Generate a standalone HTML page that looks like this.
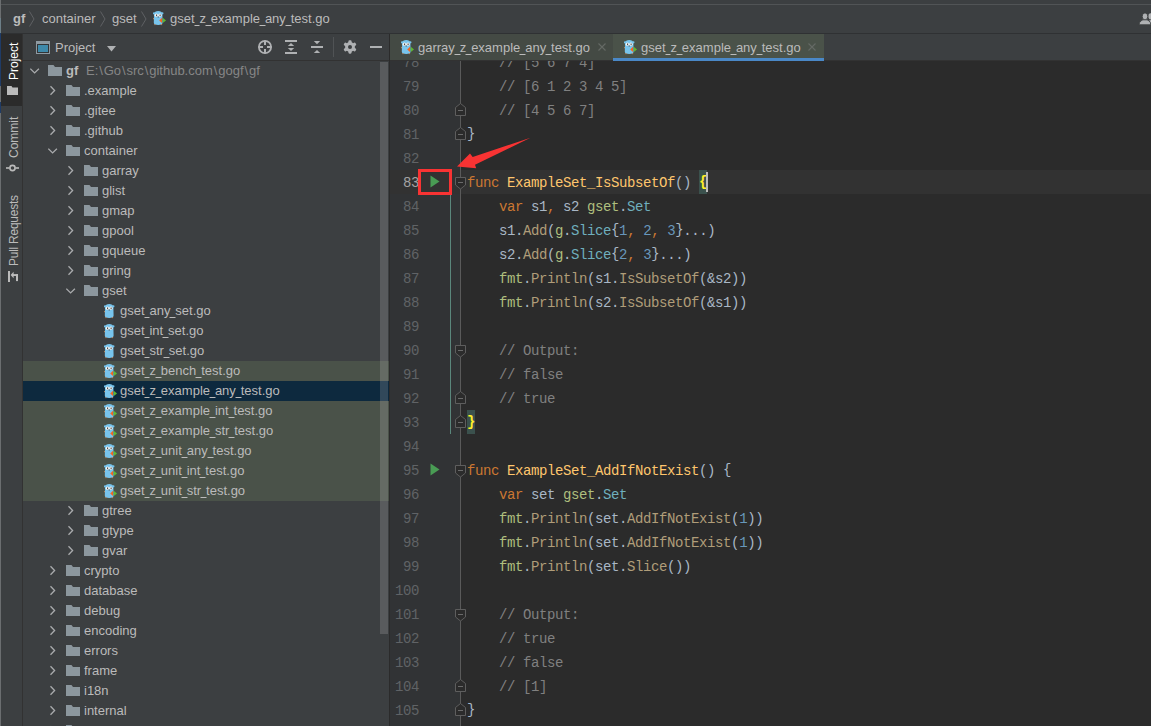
<!DOCTYPE html><html><head><meta charset="utf-8"><style>
*{margin:0;padding:0;box-sizing:border-box}
html,body{width:1151px;height:726px;overflow:hidden;background:#3c3f41}
body{position:relative;font-family:"Liberation Sans",sans-serif;font-size:13px;color:#bbbbbb}
.a{position:absolute}
.t{position:absolute;white-space:pre;line-height:20px;height:20px}
.u{display:inline-block;width:4.9px;height:1px;vertical-align:-3px;background:currentColor;box-shadow:-0.5px 0 0 currentColor,0.5px 0 0 currentColor}.bs{margin:0 0.9px}
#ed{position:absolute;left:390px;top:61px;width:761px;height:665px;overflow:hidden;background:#2b2b2b}
.code{position:absolute;left:77px;white-space:pre;font-family:"Liberation Mono",monospace;font-size:14px;letter-spacing:-0.4px;line-height:24px;height:24px;color:#a9b7c6}
.ln{position:absolute;left:0;width:29px;text-align:right;white-space:pre;font-family:"Liberation Mono",monospace;font-size:14px;letter-spacing:-0.4px;line-height:24px;height:24px;color:#606366}
.k{color:#cc7832}.fn{color:#ffc66d}.pk{color:#afbf7e}.ty{color:#6fafbd}.mc{color:#b09d79}.nu{color:#6897bb}.cm{color:#808080}
.hb{color:#ffef28;font-weight:bold}
.br{position:relative;top:-1px}
</style></head><body>

<div class="a" style="left:0;top:0;width:1px;height:726px;background:#6b6e70"></div>
<div class="a" style="left:0;top:18px;width:1px;height:15px;background:#6d7f88"></div>
<div class="a" style="left:0;top:33px;width:1px;height:53px;background:#1f3b66"></div>
<div class="a" style="left:0;top:102px;width:1px;height:11px;background:#1f3b66"></div>
<div class="a" style="left:1px;top:4px;width:1150px;height:1px;background:#515456"></div>
<div class="a" style="left:1px;top:33px;width:1150px;height:1px;background:#2f3133"></div>
<div class="t" style="left:13px;top:9px;font-weight:bold">gf</div>
<svg style="position:absolute;left:29px;top:11px" width="6" height="16" viewBox="0 0 6 16"><path d="M0.5,0.5 L5,8 L0.5,15.5" fill="none" stroke="#5e6163" stroke-width="1"/></svg>
<div class="t" style="left:42px;top:9px">container</div>
<svg style="position:absolute;left:100px;top:11px" width="6" height="16" viewBox="0 0 6 16"><path d="M0.5,0.5 L5,8 L0.5,15.5" fill="none" stroke="#5e6163" stroke-width="1"/></svg>
<div class="t" style="left:112px;top:9px">gset</div>
<svg style="position:absolute;left:141px;top:11px" width="6" height="16" viewBox="0 0 6 16"><path d="M0.5,0.5 L5,8 L0.5,15.5" fill="none" stroke="#5e6163" stroke-width="1"/></svg>
<svg style="position:absolute;left:153px;top:11px" width="14" height="15" viewBox="0 0 14 15"><path d="M1,3.2 C1,1 3,0 5.2,0 C7.4,0 9.4,1 9.4,3.2 L9.6,11.5 C9.6,13.3 7.8,14 5.2,14 C2.6,14 0.8,13.3 0.8,11.5 Z" fill="#78c4ec"/><circle cx="1" cy="2.3" r="1.1" fill="#78c4ec"/><circle cx="9.4" cy="2.3" r="1.1" fill="#78c4ec"/><circle cx="3.4" cy="4.3" r="1.7" fill="#f2f2f2"/><circle cx="6.9" cy="4.3" r="1.7" fill="#f2f2f2"/><rect x="3.1" y="3.5" width="1" height="1.7" fill="#3c3c3c"/><rect x="6.6" y="3.5" width="1" height="1.7" fill="#3c3c3c"/><rect x="4.6" y="5.6" width="1.3" height="0.9" fill="#5a5a5a"/><rect x="-0.1" y="7" width="1" height="1.2" fill="#c08a60"/><rect x="1.3" y="13.1" width="1.2" height="1" fill="#c08a60"/><rect x="7.9" y="13.1" width="1.2" height="1" fill="#c08a60"/><path d="M9,6.8 L6.2,9.4 L9,12 Z" fill="#f26522"/><path d="M9.8,6.8 L13,9.4 L9.8,12 Z" fill="#5fb832"/></svg>
<div class="t" style="left:170px;top:9px">gset<span class="u"></span>z<span class="u"></span>example<span class="u"></span>any<span class="u"></span>test.go</div>
<svg style="position:absolute;left:1138px;top:12px" width="13" height="14" viewBox="0 0 13 14"><ellipse cx="12.6" cy="4.3" rx="2.2" ry="3.1" fill="#afb1b3"/><path d="M10,11 C10.5,8.8 11.5,8 13,8 V11 Z" fill="#afb1b3"/><path d="M1,12.8 C1.3,9.4 3.8,7.6 7,7.6 C10.2,7.6 12.7,9.4 13,12.8 Z" fill="#afb1b3" stroke="#3c3f41" stroke-width="0.9"/><ellipse cx="7" cy="4.4" rx="2.8" ry="3.5" fill="#afb1b3" stroke="#3c3f41" stroke-width="0.9"/></svg>
<div class="a" style="left:1px;top:34px;width:21px;height:72px;background:#2b2b2b"></div>
<div class="a" style="left:22px;top:34px;width:1px;height:692px;background:#323232"></div>
<div class="a" style="left:6.5px;top:42px;width:38px;height:14px;line-height:14px;white-space:pre;color:#ffffff;font-size:12px;letter-spacing:0px;transform-origin:0 0;transform:translate(0,38px) rotate(-90deg)">Project</div>
<svg style="position:absolute;left:7px;top:86px" width="11" height="9" viewBox="0 0 11 9"><path d="M0,0 H4.5 L5.5,1.5 H11 V9 H0 Z" fill="#bbbbbb"/></svg>
<div class="a" style="left:7px;top:117px;width:41px;height:14px;line-height:14px;white-space:pre;color:#bbbbbb;font-size:12px;letter-spacing:0px;transform-origin:0 0;transform:translate(0,41px) rotate(-90deg)">Commit</div>
<svg style="position:absolute;left:6px;top:164px" width="13" height="8" viewBox="0 0 13 8"><circle cx="6.5" cy="4" r="2.6" fill="none" stroke="#bbbbbb" stroke-width="1.6"/><rect x="0" y="3.2" width="3.5" height="1.6" fill="#bbbbbb"/><rect x="9.5" y="3.2" width="3.5" height="1.6" fill="#bbbbbb"/></svg>
<div class="a" style="left:6.5px;top:196px;width:70px;height:14px;line-height:14px;white-space:pre;color:#bbbbbb;font-size:12px;letter-spacing:-0.25px;transform-origin:0 0;transform:translate(0,70px) rotate(-90deg)">Pull Requests</div>
<svg style="position:absolute;left:8px;top:271px" width="10" height="11" viewBox="0 0 10 11"><rect x="0" y="0" width="2" height="11" fill="#bbbbbb"/><path d="M2.6,4 L5.6,0.8 L5.6,7.2 Z" fill="#bbbbbb"/><rect x="5" y="3.1" width="5" height="1.9" fill="#bbbbbb"/><rect x="8" y="3.1" width="2" height="7" fill="#bbbbbb"/></svg>
<div class="a" style="left:23px;top:60px;width:366px;height:1px;background:#323232"></div>
<svg style="position:absolute;left:36px;top:41px" width="14" height="13" viewBox="0 0 14 13"><rect x="0" y="0" width="14" height="13" fill="#8e9aa2"/><rect x="1" y="3" width="12" height="9" fill="#323537"/><rect x="2" y="4" width="10" height="7" fill="#3e8aab"/></svg>
<div class="t" style="left:55px;top:38px">Project</div>
<svg style="position:absolute;left:107px;top:46px" width="10" height="6" viewBox="0 0 10 6"><path d="M0,0 H9 L4.5,5.5 Z" fill="#afb1b3"/></svg>
<svg style="position:absolute;left:258px;top:40px" width="14" height="14" viewBox="0 0 14 14"><circle cx="7" cy="7" r="6.1" fill="none" stroke="#afb1b3" stroke-width="1.8"/><rect x="6" y="0.5" width="2" height="4.5" fill="#afb1b3"/><rect x="6" y="9" width="2" height="4.5" fill="#afb1b3"/><rect x="0.5" y="6" width="4.5" height="2" fill="#afb1b3"/><rect x="9" y="6" width="4.5" height="2" fill="#afb1b3"/></svg>
<svg style="position:absolute;left:285px;top:40px" width="12" height="14" viewBox="0 0 12 14"><rect x="0" y="0" width="12" height="2" fill="#afb1b3"/><rect x="0" y="12" width="12" height="2" fill="#afb1b3"/><path d="M2.8,6 L6,2.9 L9.2,6 Z" fill="#afb1b3"/><path d="M2.8,8 L6,11.1 L9.2,8 Z" fill="#afb1b3"/></svg>
<svg style="position:absolute;left:311px;top:40px" width="12" height="14" viewBox="0 0 12 14"><rect x="0" y="6" width="12" height="2" fill="#afb1b3"/><path d="M2.8,1 L9.2,1 L6,4.2 Z" fill="#afb1b3"/><path d="M2.8,13 L9.2,13 L6,9.9 Z" fill="#afb1b3"/></svg>
<div class="a" style="left:333px;top:37px;width:1px;height:20px;background:#505355"></div>
<svg style="position:absolute;left:343px;top:40px" width="14" height="14" viewBox="0 0 14 14"><circle cx="7" cy="7" r="4.9" fill="#afb1b3"/><rect x="5.4" y="0.3" width="3.2" height="3.5" rx="1.1" fill="#afb1b3" transform="rotate(0 7 7)"/><rect x="5.4" y="0.3" width="3.2" height="3.5" rx="1.1" fill="#afb1b3" transform="rotate(60 7 7)"/><rect x="5.4" y="0.3" width="3.2" height="3.5" rx="1.1" fill="#afb1b3" transform="rotate(120 7 7)"/><rect x="5.4" y="0.3" width="3.2" height="3.5" rx="1.1" fill="#afb1b3" transform="rotate(180 7 7)"/><rect x="5.4" y="0.3" width="3.2" height="3.5" rx="1.1" fill="#afb1b3" transform="rotate(240 7 7)"/><rect x="5.4" y="0.3" width="3.2" height="3.5" rx="1.1" fill="#afb1b3" transform="rotate(300 7 7)"/><circle cx="7" cy="7" r="2" fill="#3c3f41"/></svg>
<div class="a" style="left:370px;top:46px;width:12px;height:2px;background:#afb1b3"></div>
<div class="a" style="left:23px;top:361px;width:366px;height:20px;background:#4a5249"></div>
<div class="a" style="left:23px;top:381px;width:366px;height:20px;background:#0d293e"></div>
<div class="a" style="left:23px;top:401px;width:366px;height:20px;background:#4a5249"></div>
<div class="a" style="left:23px;top:421px;width:366px;height:20px;background:#4a5249"></div>
<div class="a" style="left:23px;top:441px;width:366px;height:20px;background:#4a5249"></div>
<div class="a" style="left:23px;top:461px;width:366px;height:20px;background:#4a5249"></div>
<div class="a" style="left:23px;top:481px;width:366px;height:20px;background:#4a5249"></div>
<svg style="position:absolute;left:30px;top:68px" width="10" height="6" viewBox="0 0 10 6"><path d="M0.3,0.7 L4.6,4.9 L8.9,0.7" fill="none" stroke="#a9abad" stroke-width="1.3"/></svg>
<svg style="position:absolute;left:48px;top:65px" width="14" height="11" viewBox="0 0 14 11"><path d="M0,0 H5.5 L7,2 H14 V11 H0 Z" fill="#8c979e"/></svg>
<div class="t" style="left:66px;top:61px;font-weight:bold">gf</div>
<div class="t" style="left:86px;top:61px;color:#868686">E:<span class="bs">\</span>Go<span class="bs">\</span>src<span class="bs">\</span>github.com<span class="bs">\</span>gogf<span class="bs">\</span>gf</div>
<svg style="position:absolute;left:50px;top:85px" width="6" height="11" viewBox="0 0 6 11"><path d="M0.5,1.2 L4.6,5.5 L0.5,9.8" fill="none" stroke="#a9abad" stroke-width="1.3"/></svg>
<svg style="position:absolute;left:66px;top:85px" width="14" height="11" viewBox="0 0 14 11"><path d="M0,0 H5.5 L7,2 H14 V11 H0 Z" fill="#8c979e"/></svg>
<div class="t" style="left:84px;top:81px">.example</div>
<svg style="position:absolute;left:50px;top:105px" width="6" height="11" viewBox="0 0 6 11"><path d="M0.5,1.2 L4.6,5.5 L0.5,9.8" fill="none" stroke="#a9abad" stroke-width="1.3"/></svg>
<svg style="position:absolute;left:66px;top:105px" width="14" height="11" viewBox="0 0 14 11"><path d="M0,0 H5.5 L7,2 H14 V11 H0 Z" fill="#8c979e"/></svg>
<div class="t" style="left:84px;top:101px">.gitee</div>
<svg style="position:absolute;left:50px;top:125px" width="6" height="11" viewBox="0 0 6 11"><path d="M0.5,1.2 L4.6,5.5 L0.5,9.8" fill="none" stroke="#a9abad" stroke-width="1.3"/></svg>
<svg style="position:absolute;left:66px;top:125px" width="14" height="11" viewBox="0 0 14 11"><path d="M0,0 H5.5 L7,2 H14 V11 H0 Z" fill="#8c979e"/></svg>
<div class="t" style="left:84px;top:121px">.github</div>
<svg style="position:absolute;left:48px;top:148px" width="10" height="6" viewBox="0 0 10 6"><path d="M0.3,0.7 L4.6,4.9 L8.9,0.7" fill="none" stroke="#a9abad" stroke-width="1.3"/></svg>
<svg style="position:absolute;left:66px;top:145px" width="14" height="11" viewBox="0 0 14 11"><path d="M0,0 H5.5 L7,2 H14 V11 H0 Z" fill="#8c979e"/></svg>
<div class="t" style="left:84px;top:141px">container</div>
<svg style="position:absolute;left:68px;top:165px" width="6" height="11" viewBox="0 0 6 11"><path d="M0.5,1.2 L4.6,5.5 L0.5,9.8" fill="none" stroke="#a9abad" stroke-width="1.3"/></svg>
<svg style="position:absolute;left:84px;top:165px" width="14" height="11" viewBox="0 0 14 11"><path d="M0,0 H5.5 L7,2 H14 V11 H0 Z" fill="#8c979e"/></svg>
<div class="t" style="left:102px;top:161px">garray</div>
<svg style="position:absolute;left:68px;top:185px" width="6" height="11" viewBox="0 0 6 11"><path d="M0.5,1.2 L4.6,5.5 L0.5,9.8" fill="none" stroke="#a9abad" stroke-width="1.3"/></svg>
<svg style="position:absolute;left:84px;top:185px" width="14" height="11" viewBox="0 0 14 11"><path d="M0,0 H5.5 L7,2 H14 V11 H0 Z" fill="#8c979e"/></svg>
<div class="t" style="left:102px;top:181px">glist</div>
<svg style="position:absolute;left:68px;top:205px" width="6" height="11" viewBox="0 0 6 11"><path d="M0.5,1.2 L4.6,5.5 L0.5,9.8" fill="none" stroke="#a9abad" stroke-width="1.3"/></svg>
<svg style="position:absolute;left:84px;top:205px" width="14" height="11" viewBox="0 0 14 11"><path d="M0,0 H5.5 L7,2 H14 V11 H0 Z" fill="#8c979e"/></svg>
<div class="t" style="left:102px;top:201px">gmap</div>
<svg style="position:absolute;left:68px;top:225px" width="6" height="11" viewBox="0 0 6 11"><path d="M0.5,1.2 L4.6,5.5 L0.5,9.8" fill="none" stroke="#a9abad" stroke-width="1.3"/></svg>
<svg style="position:absolute;left:84px;top:225px" width="14" height="11" viewBox="0 0 14 11"><path d="M0,0 H5.5 L7,2 H14 V11 H0 Z" fill="#8c979e"/></svg>
<div class="t" style="left:102px;top:221px">gpool</div>
<svg style="position:absolute;left:68px;top:245px" width="6" height="11" viewBox="0 0 6 11"><path d="M0.5,1.2 L4.6,5.5 L0.5,9.8" fill="none" stroke="#a9abad" stroke-width="1.3"/></svg>
<svg style="position:absolute;left:84px;top:245px" width="14" height="11" viewBox="0 0 14 11"><path d="M0,0 H5.5 L7,2 H14 V11 H0 Z" fill="#8c979e"/></svg>
<div class="t" style="left:102px;top:241px">gqueue</div>
<svg style="position:absolute;left:68px;top:265px" width="6" height="11" viewBox="0 0 6 11"><path d="M0.5,1.2 L4.6,5.5 L0.5,9.8" fill="none" stroke="#a9abad" stroke-width="1.3"/></svg>
<svg style="position:absolute;left:84px;top:265px" width="14" height="11" viewBox="0 0 14 11"><path d="M0,0 H5.5 L7,2 H14 V11 H0 Z" fill="#8c979e"/></svg>
<div class="t" style="left:102px;top:261px">gring</div>
<svg style="position:absolute;left:66px;top:288px" width="10" height="6" viewBox="0 0 10 6"><path d="M0.3,0.7 L4.6,4.9 L8.9,0.7" fill="none" stroke="#a9abad" stroke-width="1.3"/></svg>
<svg style="position:absolute;left:84px;top:285px" width="14" height="11" viewBox="0 0 14 11"><path d="M0,0 H5.5 L7,2 H14 V11 H0 Z" fill="#8c979e"/></svg>
<div class="t" style="left:102px;top:281px">gset</div>
<svg style="position:absolute;left:104px;top:304px" width="14" height="15" viewBox="0 0 14 15"><path d="M1,3.2 C1,1 3,0 5.2,0 C7.4,0 9.4,1 9.4,3.2 L9.6,11.5 C9.6,13.3 7.8,14 5.2,14 C2.6,14 0.8,13.3 0.8,11.5 Z" fill="#78c4ec"/><circle cx="1" cy="2.3" r="1.1" fill="#78c4ec"/><circle cx="9.4" cy="2.3" r="1.1" fill="#78c4ec"/><circle cx="3.4" cy="4.3" r="1.7" fill="#f2f2f2"/><circle cx="6.9" cy="4.3" r="1.7" fill="#f2f2f2"/><rect x="3.1" y="3.5" width="1" height="1.7" fill="#3c3c3c"/><rect x="6.6" y="3.5" width="1" height="1.7" fill="#3c3c3c"/><rect x="4.6" y="5.6" width="1.3" height="0.9" fill="#5a5a5a"/><rect x="-0.1" y="7" width="1" height="1.2" fill="#c08a60"/><rect x="1.3" y="13.1" width="1.2" height="1" fill="#c08a60"/><rect x="7.9" y="13.1" width="1.2" height="1" fill="#c08a60"/></svg>
<div class="t" style="left:120px;top:301px">gset<span class="u"></span>any<span class="u"></span>set.go</div>
<svg style="position:absolute;left:104px;top:324px" width="14" height="15" viewBox="0 0 14 15"><path d="M1,3.2 C1,1 3,0 5.2,0 C7.4,0 9.4,1 9.4,3.2 L9.6,11.5 C9.6,13.3 7.8,14 5.2,14 C2.6,14 0.8,13.3 0.8,11.5 Z" fill="#78c4ec"/><circle cx="1" cy="2.3" r="1.1" fill="#78c4ec"/><circle cx="9.4" cy="2.3" r="1.1" fill="#78c4ec"/><circle cx="3.4" cy="4.3" r="1.7" fill="#f2f2f2"/><circle cx="6.9" cy="4.3" r="1.7" fill="#f2f2f2"/><rect x="3.1" y="3.5" width="1" height="1.7" fill="#3c3c3c"/><rect x="6.6" y="3.5" width="1" height="1.7" fill="#3c3c3c"/><rect x="4.6" y="5.6" width="1.3" height="0.9" fill="#5a5a5a"/><rect x="-0.1" y="7" width="1" height="1.2" fill="#c08a60"/><rect x="1.3" y="13.1" width="1.2" height="1" fill="#c08a60"/><rect x="7.9" y="13.1" width="1.2" height="1" fill="#c08a60"/></svg>
<div class="t" style="left:120px;top:321px">gset<span class="u"></span>int<span class="u"></span>set.go</div>
<svg style="position:absolute;left:104px;top:344px" width="14" height="15" viewBox="0 0 14 15"><path d="M1,3.2 C1,1 3,0 5.2,0 C7.4,0 9.4,1 9.4,3.2 L9.6,11.5 C9.6,13.3 7.8,14 5.2,14 C2.6,14 0.8,13.3 0.8,11.5 Z" fill="#78c4ec"/><circle cx="1" cy="2.3" r="1.1" fill="#78c4ec"/><circle cx="9.4" cy="2.3" r="1.1" fill="#78c4ec"/><circle cx="3.4" cy="4.3" r="1.7" fill="#f2f2f2"/><circle cx="6.9" cy="4.3" r="1.7" fill="#f2f2f2"/><rect x="3.1" y="3.5" width="1" height="1.7" fill="#3c3c3c"/><rect x="6.6" y="3.5" width="1" height="1.7" fill="#3c3c3c"/><rect x="4.6" y="5.6" width="1.3" height="0.9" fill="#5a5a5a"/><rect x="-0.1" y="7" width="1" height="1.2" fill="#c08a60"/><rect x="1.3" y="13.1" width="1.2" height="1" fill="#c08a60"/><rect x="7.9" y="13.1" width="1.2" height="1" fill="#c08a60"/></svg>
<div class="t" style="left:120px;top:341px">gset<span class="u"></span>str<span class="u"></span>set.go</div>
<svg style="position:absolute;left:104px;top:364px" width="14" height="15" viewBox="0 0 14 15"><path d="M1,3.2 C1,1 3,0 5.2,0 C7.4,0 9.4,1 9.4,3.2 L9.6,11.5 C9.6,13.3 7.8,14 5.2,14 C2.6,14 0.8,13.3 0.8,11.5 Z" fill="#78c4ec"/><circle cx="1" cy="2.3" r="1.1" fill="#78c4ec"/><circle cx="9.4" cy="2.3" r="1.1" fill="#78c4ec"/><circle cx="3.4" cy="4.3" r="1.7" fill="#f2f2f2"/><circle cx="6.9" cy="4.3" r="1.7" fill="#f2f2f2"/><rect x="3.1" y="3.5" width="1" height="1.7" fill="#3c3c3c"/><rect x="6.6" y="3.5" width="1" height="1.7" fill="#3c3c3c"/><rect x="4.6" y="5.6" width="1.3" height="0.9" fill="#5a5a5a"/><rect x="-0.1" y="7" width="1" height="1.2" fill="#c08a60"/><rect x="1.3" y="13.1" width="1.2" height="1" fill="#c08a60"/><rect x="7.9" y="13.1" width="1.2" height="1" fill="#c08a60"/><path d="M9,6.8 L6.2,9.4 L9,12 Z" fill="#f26522"/><path d="M9.8,6.8 L13,9.4 L9.8,12 Z" fill="#5fb832"/></svg>
<div class="t" style="left:120px;top:361px">gset<span class="u"></span>z<span class="u"></span>bench<span class="u"></span>test.go</div>
<svg style="position:absolute;left:104px;top:384px" width="14" height="15" viewBox="0 0 14 15"><path d="M1,3.2 C1,1 3,0 5.2,0 C7.4,0 9.4,1 9.4,3.2 L9.6,11.5 C9.6,13.3 7.8,14 5.2,14 C2.6,14 0.8,13.3 0.8,11.5 Z" fill="#78c4ec"/><circle cx="1" cy="2.3" r="1.1" fill="#78c4ec"/><circle cx="9.4" cy="2.3" r="1.1" fill="#78c4ec"/><circle cx="3.4" cy="4.3" r="1.7" fill="#f2f2f2"/><circle cx="6.9" cy="4.3" r="1.7" fill="#f2f2f2"/><rect x="3.1" y="3.5" width="1" height="1.7" fill="#3c3c3c"/><rect x="6.6" y="3.5" width="1" height="1.7" fill="#3c3c3c"/><rect x="4.6" y="5.6" width="1.3" height="0.9" fill="#5a5a5a"/><rect x="-0.1" y="7" width="1" height="1.2" fill="#c08a60"/><rect x="1.3" y="13.1" width="1.2" height="1" fill="#c08a60"/><rect x="7.9" y="13.1" width="1.2" height="1" fill="#c08a60"/><path d="M9,6.8 L6.2,9.4 L9,12 Z" fill="#f26522"/><path d="M9.8,6.8 L13,9.4 L9.8,12 Z" fill="#5fb832"/></svg>
<div class="t" style="left:120px;top:381px">gset<span class="u"></span>z<span class="u"></span>example<span class="u"></span>any<span class="u"></span>test.go</div>
<svg style="position:absolute;left:104px;top:404px" width="14" height="15" viewBox="0 0 14 15"><path d="M1,3.2 C1,1 3,0 5.2,0 C7.4,0 9.4,1 9.4,3.2 L9.6,11.5 C9.6,13.3 7.8,14 5.2,14 C2.6,14 0.8,13.3 0.8,11.5 Z" fill="#78c4ec"/><circle cx="1" cy="2.3" r="1.1" fill="#78c4ec"/><circle cx="9.4" cy="2.3" r="1.1" fill="#78c4ec"/><circle cx="3.4" cy="4.3" r="1.7" fill="#f2f2f2"/><circle cx="6.9" cy="4.3" r="1.7" fill="#f2f2f2"/><rect x="3.1" y="3.5" width="1" height="1.7" fill="#3c3c3c"/><rect x="6.6" y="3.5" width="1" height="1.7" fill="#3c3c3c"/><rect x="4.6" y="5.6" width="1.3" height="0.9" fill="#5a5a5a"/><rect x="-0.1" y="7" width="1" height="1.2" fill="#c08a60"/><rect x="1.3" y="13.1" width="1.2" height="1" fill="#c08a60"/><rect x="7.9" y="13.1" width="1.2" height="1" fill="#c08a60"/><path d="M9,6.8 L6.2,9.4 L9,12 Z" fill="#f26522"/><path d="M9.8,6.8 L13,9.4 L9.8,12 Z" fill="#5fb832"/></svg>
<div class="t" style="left:120px;top:401px">gset<span class="u"></span>z<span class="u"></span>example<span class="u"></span>int<span class="u"></span>test.go</div>
<svg style="position:absolute;left:104px;top:424px" width="14" height="15" viewBox="0 0 14 15"><path d="M1,3.2 C1,1 3,0 5.2,0 C7.4,0 9.4,1 9.4,3.2 L9.6,11.5 C9.6,13.3 7.8,14 5.2,14 C2.6,14 0.8,13.3 0.8,11.5 Z" fill="#78c4ec"/><circle cx="1" cy="2.3" r="1.1" fill="#78c4ec"/><circle cx="9.4" cy="2.3" r="1.1" fill="#78c4ec"/><circle cx="3.4" cy="4.3" r="1.7" fill="#f2f2f2"/><circle cx="6.9" cy="4.3" r="1.7" fill="#f2f2f2"/><rect x="3.1" y="3.5" width="1" height="1.7" fill="#3c3c3c"/><rect x="6.6" y="3.5" width="1" height="1.7" fill="#3c3c3c"/><rect x="4.6" y="5.6" width="1.3" height="0.9" fill="#5a5a5a"/><rect x="-0.1" y="7" width="1" height="1.2" fill="#c08a60"/><rect x="1.3" y="13.1" width="1.2" height="1" fill="#c08a60"/><rect x="7.9" y="13.1" width="1.2" height="1" fill="#c08a60"/><path d="M9,6.8 L6.2,9.4 L9,12 Z" fill="#f26522"/><path d="M9.8,6.8 L13,9.4 L9.8,12 Z" fill="#5fb832"/></svg>
<div class="t" style="left:120px;top:421px">gset<span class="u"></span>z<span class="u"></span>example<span class="u"></span>str<span class="u"></span>test.go</div>
<svg style="position:absolute;left:104px;top:444px" width="14" height="15" viewBox="0 0 14 15"><path d="M1,3.2 C1,1 3,0 5.2,0 C7.4,0 9.4,1 9.4,3.2 L9.6,11.5 C9.6,13.3 7.8,14 5.2,14 C2.6,14 0.8,13.3 0.8,11.5 Z" fill="#78c4ec"/><circle cx="1" cy="2.3" r="1.1" fill="#78c4ec"/><circle cx="9.4" cy="2.3" r="1.1" fill="#78c4ec"/><circle cx="3.4" cy="4.3" r="1.7" fill="#f2f2f2"/><circle cx="6.9" cy="4.3" r="1.7" fill="#f2f2f2"/><rect x="3.1" y="3.5" width="1" height="1.7" fill="#3c3c3c"/><rect x="6.6" y="3.5" width="1" height="1.7" fill="#3c3c3c"/><rect x="4.6" y="5.6" width="1.3" height="0.9" fill="#5a5a5a"/><rect x="-0.1" y="7" width="1" height="1.2" fill="#c08a60"/><rect x="1.3" y="13.1" width="1.2" height="1" fill="#c08a60"/><rect x="7.9" y="13.1" width="1.2" height="1" fill="#c08a60"/><path d="M9,6.8 L6.2,9.4 L9,12 Z" fill="#f26522"/><path d="M9.8,6.8 L13,9.4 L9.8,12 Z" fill="#5fb832"/></svg>
<div class="t" style="left:120px;top:441px">gset<span class="u"></span>z<span class="u"></span>unit<span class="u"></span>any<span class="u"></span>test.go</div>
<svg style="position:absolute;left:104px;top:464px" width="14" height="15" viewBox="0 0 14 15"><path d="M1,3.2 C1,1 3,0 5.2,0 C7.4,0 9.4,1 9.4,3.2 L9.6,11.5 C9.6,13.3 7.8,14 5.2,14 C2.6,14 0.8,13.3 0.8,11.5 Z" fill="#78c4ec"/><circle cx="1" cy="2.3" r="1.1" fill="#78c4ec"/><circle cx="9.4" cy="2.3" r="1.1" fill="#78c4ec"/><circle cx="3.4" cy="4.3" r="1.7" fill="#f2f2f2"/><circle cx="6.9" cy="4.3" r="1.7" fill="#f2f2f2"/><rect x="3.1" y="3.5" width="1" height="1.7" fill="#3c3c3c"/><rect x="6.6" y="3.5" width="1" height="1.7" fill="#3c3c3c"/><rect x="4.6" y="5.6" width="1.3" height="0.9" fill="#5a5a5a"/><rect x="-0.1" y="7" width="1" height="1.2" fill="#c08a60"/><rect x="1.3" y="13.1" width="1.2" height="1" fill="#c08a60"/><rect x="7.9" y="13.1" width="1.2" height="1" fill="#c08a60"/><path d="M9,6.8 L6.2,9.4 L9,12 Z" fill="#f26522"/><path d="M9.8,6.8 L13,9.4 L9.8,12 Z" fill="#5fb832"/></svg>
<div class="t" style="left:120px;top:461px">gset<span class="u"></span>z<span class="u"></span>unit<span class="u"></span>int<span class="u"></span>test.go</div>
<svg style="position:absolute;left:104px;top:484px" width="14" height="15" viewBox="0 0 14 15"><path d="M1,3.2 C1,1 3,0 5.2,0 C7.4,0 9.4,1 9.4,3.2 L9.6,11.5 C9.6,13.3 7.8,14 5.2,14 C2.6,14 0.8,13.3 0.8,11.5 Z" fill="#78c4ec"/><circle cx="1" cy="2.3" r="1.1" fill="#78c4ec"/><circle cx="9.4" cy="2.3" r="1.1" fill="#78c4ec"/><circle cx="3.4" cy="4.3" r="1.7" fill="#f2f2f2"/><circle cx="6.9" cy="4.3" r="1.7" fill="#f2f2f2"/><rect x="3.1" y="3.5" width="1" height="1.7" fill="#3c3c3c"/><rect x="6.6" y="3.5" width="1" height="1.7" fill="#3c3c3c"/><rect x="4.6" y="5.6" width="1.3" height="0.9" fill="#5a5a5a"/><rect x="-0.1" y="7" width="1" height="1.2" fill="#c08a60"/><rect x="1.3" y="13.1" width="1.2" height="1" fill="#c08a60"/><rect x="7.9" y="13.1" width="1.2" height="1" fill="#c08a60"/><path d="M9,6.8 L6.2,9.4 L9,12 Z" fill="#f26522"/><path d="M9.8,6.8 L13,9.4 L9.8,12 Z" fill="#5fb832"/></svg>
<div class="t" style="left:120px;top:481px">gset<span class="u"></span>z<span class="u"></span>unit<span class="u"></span>str<span class="u"></span>test.go</div>
<svg style="position:absolute;left:68px;top:505px" width="6" height="11" viewBox="0 0 6 11"><path d="M0.5,1.2 L4.6,5.5 L0.5,9.8" fill="none" stroke="#a9abad" stroke-width="1.3"/></svg>
<svg style="position:absolute;left:84px;top:505px" width="14" height="11" viewBox="0 0 14 11"><path d="M0,0 H5.5 L7,2 H14 V11 H0 Z" fill="#8c979e"/></svg>
<div class="t" style="left:102px;top:501px">gtree</div>
<svg style="position:absolute;left:68px;top:525px" width="6" height="11" viewBox="0 0 6 11"><path d="M0.5,1.2 L4.6,5.5 L0.5,9.8" fill="none" stroke="#a9abad" stroke-width="1.3"/></svg>
<svg style="position:absolute;left:84px;top:525px" width="14" height="11" viewBox="0 0 14 11"><path d="M0,0 H5.5 L7,2 H14 V11 H0 Z" fill="#8c979e"/></svg>
<div class="t" style="left:102px;top:521px">gtype</div>
<svg style="position:absolute;left:68px;top:545px" width="6" height="11" viewBox="0 0 6 11"><path d="M0.5,1.2 L4.6,5.5 L0.5,9.8" fill="none" stroke="#a9abad" stroke-width="1.3"/></svg>
<svg style="position:absolute;left:84px;top:545px" width="14" height="11" viewBox="0 0 14 11"><path d="M0,0 H5.5 L7,2 H14 V11 H0 Z" fill="#8c979e"/></svg>
<div class="t" style="left:102px;top:541px">gvar</div>
<svg style="position:absolute;left:50px;top:565px" width="6" height="11" viewBox="0 0 6 11"><path d="M0.5,1.2 L4.6,5.5 L0.5,9.8" fill="none" stroke="#a9abad" stroke-width="1.3"/></svg>
<svg style="position:absolute;left:66px;top:565px" width="14" height="11" viewBox="0 0 14 11"><path d="M0,0 H5.5 L7,2 H14 V11 H0 Z" fill="#8c979e"/></svg>
<div class="t" style="left:84px;top:561px">crypto</div>
<svg style="position:absolute;left:50px;top:585px" width="6" height="11" viewBox="0 0 6 11"><path d="M0.5,1.2 L4.6,5.5 L0.5,9.8" fill="none" stroke="#a9abad" stroke-width="1.3"/></svg>
<svg style="position:absolute;left:66px;top:585px" width="14" height="11" viewBox="0 0 14 11"><path d="M0,0 H5.5 L7,2 H14 V11 H0 Z" fill="#8c979e"/></svg>
<div class="t" style="left:84px;top:581px">database</div>
<svg style="position:absolute;left:50px;top:605px" width="6" height="11" viewBox="0 0 6 11"><path d="M0.5,1.2 L4.6,5.5 L0.5,9.8" fill="none" stroke="#a9abad" stroke-width="1.3"/></svg>
<svg style="position:absolute;left:66px;top:605px" width="14" height="11" viewBox="0 0 14 11"><path d="M0,0 H5.5 L7,2 H14 V11 H0 Z" fill="#8c979e"/></svg>
<div class="t" style="left:84px;top:601px">debug</div>
<svg style="position:absolute;left:50px;top:625px" width="6" height="11" viewBox="0 0 6 11"><path d="M0.5,1.2 L4.6,5.5 L0.5,9.8" fill="none" stroke="#a9abad" stroke-width="1.3"/></svg>
<svg style="position:absolute;left:66px;top:625px" width="14" height="11" viewBox="0 0 14 11"><path d="M0,0 H5.5 L7,2 H14 V11 H0 Z" fill="#8c979e"/></svg>
<div class="t" style="left:84px;top:621px">encoding</div>
<svg style="position:absolute;left:50px;top:645px" width="6" height="11" viewBox="0 0 6 11"><path d="M0.5,1.2 L4.6,5.5 L0.5,9.8" fill="none" stroke="#a9abad" stroke-width="1.3"/></svg>
<svg style="position:absolute;left:66px;top:645px" width="14" height="11" viewBox="0 0 14 11"><path d="M0,0 H5.5 L7,2 H14 V11 H0 Z" fill="#8c979e"/></svg>
<div class="t" style="left:84px;top:641px">errors</div>
<svg style="position:absolute;left:50px;top:665px" width="6" height="11" viewBox="0 0 6 11"><path d="M0.5,1.2 L4.6,5.5 L0.5,9.8" fill="none" stroke="#a9abad" stroke-width="1.3"/></svg>
<svg style="position:absolute;left:66px;top:665px" width="14" height="11" viewBox="0 0 14 11"><path d="M0,0 H5.5 L7,2 H14 V11 H0 Z" fill="#8c979e"/></svg>
<div class="t" style="left:84px;top:661px">frame</div>
<svg style="position:absolute;left:50px;top:685px" width="6" height="11" viewBox="0 0 6 11"><path d="M0.5,1.2 L4.6,5.5 L0.5,9.8" fill="none" stroke="#a9abad" stroke-width="1.3"/></svg>
<svg style="position:absolute;left:66px;top:685px" width="14" height="11" viewBox="0 0 14 11"><path d="M0,0 H5.5 L7,2 H14 V11 H0 Z" fill="#8c979e"/></svg>
<div class="t" style="left:84px;top:681px">i18n</div>
<svg style="position:absolute;left:50px;top:705px" width="6" height="11" viewBox="0 0 6 11"><path d="M0.5,1.2 L4.6,5.5 L0.5,9.8" fill="none" stroke="#a9abad" stroke-width="1.3"/></svg>
<svg style="position:absolute;left:66px;top:705px" width="14" height="11" viewBox="0 0 14 11"><path d="M0,0 H5.5 L7,2 H14 V11 H0 Z" fill="#8c979e"/></svg>
<div class="t" style="left:84px;top:701px">internal</div>
<svg style="position:absolute;left:50px;top:725px" width="6" height="11" viewBox="0 0 6 11"><path d="M0.5,1.2 L4.6,5.5 L0.5,9.8" fill="none" stroke="#a9abad" stroke-width="1.3"/></svg>
<svg style="position:absolute;left:66px;top:725px" width="14" height="11" viewBox="0 0 14 11"><path d="M0,0 H5.5 L7,2 H14 V11 H0 Z" fill="#8c979e"/></svg>
<div class="t" style="left:84px;top:721px">net</div>
<div class="a" style="left:380px;top:62px;width:8px;height:572px;background:rgba(255,255,255,0.15)"></div>
<div class="a" style="left:389px;top:34px;width:1px;height:692px;background:#2b2b2b"></div>
<div class="a" style="left:390px;top:60px;width:761px;height:1px;background:#323232"></div>
<div class="a" style="left:390px;top:34px;width:223px;height:26px;background:#444a44"></div>
<div class="a" style="left:613px;top:34px;width:211px;height:24px;background:#4a5249"></div>
<div class="a" style="left:613px;top:58px;width:211px;height:3px;background:#4a88c7"></div>
<svg style="position:absolute;left:401px;top:40px" width="14" height="15" viewBox="0 0 14 15"><path d="M1,3.2 C1,1 3,0 5.2,0 C7.4,0 9.4,1 9.4,3.2 L9.6,11.5 C9.6,13.3 7.8,14 5.2,14 C2.6,14 0.8,13.3 0.8,11.5 Z" fill="#78c4ec"/><circle cx="1" cy="2.3" r="1.1" fill="#78c4ec"/><circle cx="9.4" cy="2.3" r="1.1" fill="#78c4ec"/><circle cx="3.4" cy="4.3" r="1.7" fill="#f2f2f2"/><circle cx="6.9" cy="4.3" r="1.7" fill="#f2f2f2"/><rect x="3.1" y="3.5" width="1" height="1.7" fill="#3c3c3c"/><rect x="6.6" y="3.5" width="1" height="1.7" fill="#3c3c3c"/><rect x="4.6" y="5.6" width="1.3" height="0.9" fill="#5a5a5a"/><rect x="-0.1" y="7" width="1" height="1.2" fill="#c08a60"/><rect x="1.3" y="13.1" width="1.2" height="1" fill="#c08a60"/><rect x="7.9" y="13.1" width="1.2" height="1" fill="#c08a60"/><path d="M9,6.8 L6.2,9.4 L9,12 Z" fill="#f26522"/><path d="M9.8,6.8 L13,9.4 L9.8,12 Z" fill="#5fb832"/></svg>
<div class="t" style="left:418px;top:38px">garray<span class="u"></span>z<span class="u"></span>example<span class="u"></span>any<span class="u"></span>test.go</div>
<svg style="position:absolute;left:598px;top:43px" width="8" height="8" viewBox="0 0 8 8"><path d="M0.5,0.5 L7.5,7.5 M7.5,0.5 L0.5,7.5" stroke="#656a65" stroke-width="1.1"/></svg>
<svg style="position:absolute;left:624px;top:40px" width="14" height="15" viewBox="0 0 14 15"><path d="M1,3.2 C1,1 3,0 5.2,0 C7.4,0 9.4,1 9.4,3.2 L9.6,11.5 C9.6,13.3 7.8,14 5.2,14 C2.6,14 0.8,13.3 0.8,11.5 Z" fill="#78c4ec"/><circle cx="1" cy="2.3" r="1.1" fill="#78c4ec"/><circle cx="9.4" cy="2.3" r="1.1" fill="#78c4ec"/><circle cx="3.4" cy="4.3" r="1.7" fill="#f2f2f2"/><circle cx="6.9" cy="4.3" r="1.7" fill="#f2f2f2"/><rect x="3.1" y="3.5" width="1" height="1.7" fill="#3c3c3c"/><rect x="6.6" y="3.5" width="1" height="1.7" fill="#3c3c3c"/><rect x="4.6" y="5.6" width="1.3" height="0.9" fill="#5a5a5a"/><rect x="-0.1" y="7" width="1" height="1.2" fill="#c08a60"/><rect x="1.3" y="13.1" width="1.2" height="1" fill="#c08a60"/><rect x="7.9" y="13.1" width="1.2" height="1" fill="#c08a60"/><path d="M9,6.8 L6.2,9.4 L9,12 Z" fill="#f26522"/><path d="M9.8,6.8 L13,9.4 L9.8,12 Z" fill="#5fb832"/></svg>
<div class="t" style="left:641px;top:38px">gset<span class="u"></span>z<span class="u"></span>example<span class="u"></span>any<span class="u"></span>test.go</div>
<svg style="position:absolute;left:808px;top:43px" width="8" height="8" viewBox="0 0 8 8"><path d="M0.5,0.5 L7.5,7.5 M7.5,0.5 L0.5,7.5" stroke="#656a65" stroke-width="1.1"/></svg>
<div id="ed">
<div class="a" style="left:0;top:0;width:71px;height:665px;background:#313335"></div>
<div class="a" style="left:0;top:109px;width:761px;height:24px;background:#323232"></div>
<div class="a" style="left:60px;top:109px;width:1px;height:264px;background:#5a877c"></div>
<div class="a" style="left:70px;top:0;width:1px;height:665px;background:#5a5a5a"></div>
<div class="a" style="left:309px;top:109px;width:8px;height:24px;background:#3b514d"></div>
<div class="a" style="left:77px;top:349px;width:8px;height:24px;background:#3b514d"></div>
<div class="ln" style="top:-10px">78</div>
<div class="code" style="top:-10px">    <span class="cm">// [5 6 7 4]</span></div>
<div class="ln" style="top:14px">79</div>
<div class="code" style="top:14px">    <span class="cm">// [6 1 2 3 4 5]</span></div>
<div class="ln" style="top:38px">80</div>
<div class="code" style="top:38px">    <span class="cm">// [4 5 6 7]</span></div>
<div class="ln" style="top:62px">81</div>
<div class="code" style="top:62px"><span class="br">}</span></div>
<div class="ln" style="top:86px">82</div>
<div class="code" style="top:86px"></div>
<div class="ln" style="top:110px;color:#a4a3a3">83</div>
<div class="code" style="top:110px"><span class="k">func </span><span class="fn">ExampleSet_IsSubsetOf</span>() <span class="hb"><span class="br">{</span></span></div>
<div class="ln" style="top:134px">84</div>
<div class="code" style="top:134px">    <span class="k">var </span>s1<span class="k">,</span> s2 <span class="pk">gset</span>.<span class="ty">Set</span></div>
<div class="ln" style="top:158px">85</div>
<div class="code" style="top:158px">    s1.<span class="mc">Add</span>(<span class="pk">g</span>.<span class="ty">Slice</span><span class="br">{</span><span class="nu">1</span><span class="k">, </span><span class="nu">2</span><span class="k">, </span><span class="nu">3</span><span class="br">}</span>...)</div>
<div class="ln" style="top:182px">86</div>
<div class="code" style="top:182px">    s2.<span class="mc">Add</span>(<span class="pk">g</span>.<span class="ty">Slice</span><span class="br">{</span><span class="nu">2</span><span class="k">, </span><span class="nu">3</span><span class="br">}</span>...)</div>
<div class="ln" style="top:206px">87</div>
<div class="code" style="top:206px">    <span class="pk">fmt</span>.<span class="mc">Println</span>(s1.<span class="mc">IsSubsetOf</span>(&amp;s2))</div>
<div class="ln" style="top:230px">88</div>
<div class="code" style="top:230px">    <span class="pk">fmt</span>.<span class="mc">Println</span>(s2.<span class="mc">IsSubsetOf</span>(&amp;s1))</div>
<div class="ln" style="top:254px">89</div>
<div class="code" style="top:254px">    </div>
<div class="ln" style="top:278px">90</div>
<div class="code" style="top:278px">    <span class="cm">// Output:</span></div>
<div class="ln" style="top:302px">91</div>
<div class="code" style="top:302px">    <span class="cm">// false</span></div>
<div class="ln" style="top:326px">92</div>
<div class="code" style="top:326px">    <span class="cm">// true</span></div>
<div class="ln" style="top:350px">93</div>
<div class="code" style="top:350px"><span class="hb"><span class="br">}</span></span></div>
<div class="ln" style="top:374px">94</div>
<div class="code" style="top:374px"></div>
<div class="ln" style="top:398px">95</div>
<div class="code" style="top:398px"><span class="k">func </span><span class="fn">ExampleSet_AddIfNotExist</span>() <span class="br">{</span></div>
<div class="ln" style="top:422px">96</div>
<div class="code" style="top:422px">    <span class="k">var </span>set <span class="pk">gset</span>.<span class="ty">Set</span></div>
<div class="ln" style="top:446px">97</div>
<div class="code" style="top:446px">    <span class="pk">fmt</span>.<span class="mc">Println</span>(set.<span class="mc">AddIfNotExist</span>(<span class="nu">1</span>))</div>
<div class="ln" style="top:470px">98</div>
<div class="code" style="top:470px">    <span class="pk">fmt</span>.<span class="mc">Println</span>(set.<span class="mc">AddIfNotExist</span>(<span class="nu">1</span>))</div>
<div class="ln" style="top:494px">99</div>
<div class="code" style="top:494px">    <span class="pk">fmt</span>.<span class="mc">Println</span>(set.<span class="mc">Slice</span>())</div>
<div class="ln" style="top:518px">100</div>
<div class="code" style="top:518px">    </div>
<div class="ln" style="top:542px">101</div>
<div class="code" style="top:542px">    <span class="cm">// Output:</span></div>
<div class="ln" style="top:566px">102</div>
<div class="code" style="top:566px">    <span class="cm">// true</span></div>
<div class="ln" style="top:590px">103</div>
<div class="code" style="top:590px">    <span class="cm">// false</span></div>
<div class="ln" style="top:614px">104</div>
<div class="code" style="top:614px">    <span class="cm">// [1]</span></div>
<div class="ln" style="top:638px">105</div>
<div class="code" style="top:638px"><span class="br">}</span></div>
<div class="a" style="left:316px;top:111px;width:2px;height:20px;background:#bbbbbb"></div>
<svg style="position:absolute;left:65px;top:115px" width="11" height="14" viewBox="0 0 11 14"><path d="M0.5,1.5 H10.5 V9 L5.5,13 L0.5,9 Z" fill="#2b2b2b" stroke="#5e5e5e"/><path d="M3,6.5 H8" stroke="#6a6a6a"/></svg>
<svg style="position:absolute;left:65px;top:283px" width="11" height="14" viewBox="0 0 11 14"><path d="M0.5,1.5 H10.5 V9 L5.5,13 L0.5,9 Z" fill="#2b2b2b" stroke="#5e5e5e"/><path d="M3,6.5 H8" stroke="#6a6a6a"/></svg>
<svg style="position:absolute;left:65px;top:403px" width="11" height="14" viewBox="0 0 11 14"><path d="M0.5,1.5 H10.5 V9 L5.5,13 L0.5,9 Z" fill="#2b2b2b" stroke="#5e5e5e"/><path d="M3,6.5 H8" stroke="#6a6a6a"/></svg>
<svg style="position:absolute;left:65px;top:547px" width="11" height="14" viewBox="0 0 11 14"><path d="M0.5,1.5 H10.5 V9 L5.5,13 L0.5,9 Z" fill="#2b2b2b" stroke="#5e5e5e"/><path d="M3,6.5 H8" stroke="#6a6a6a"/></svg>
<svg style="position:absolute;left:65px;top:42px" width="11" height="13" viewBox="0 0 11 13"><path d="M0.5,12.5 H10.5 V4.5 L5.5,0.5 L0.5,4.5 Z" fill="#2b2b2b" stroke="#5e5e5e"/><path d="M3,7.5 H8" stroke="#6a6a6a"/></svg>
<svg style="position:absolute;left:65px;top:66px" width="11" height="13" viewBox="0 0 11 13"><path d="M0.5,12.5 H10.5 V4.5 L5.5,0.5 L0.5,4.5 Z" fill="#2b2b2b" stroke="#5e5e5e"/><path d="M3,7.5 H8" stroke="#6a6a6a"/></svg>
<svg style="position:absolute;left:65px;top:330px" width="11" height="13" viewBox="0 0 11 13"><path d="M0.5,12.5 H10.5 V4.5 L5.5,0.5 L0.5,4.5 Z" fill="#2b2b2b" stroke="#5e5e5e"/><path d="M3,7.5 H8" stroke="#6a6a6a"/></svg>
<svg style="position:absolute;left:65px;top:354px" width="11" height="13" viewBox="0 0 11 13"><path d="M0.5,12.5 H10.5 V4.5 L5.5,0.5 L0.5,4.5 Z" fill="#2b2b2b" stroke="#5e5e5e"/><path d="M3,7.5 H8" stroke="#6a6a6a"/></svg>
<svg style="position:absolute;left:65px;top:618px" width="11" height="13" viewBox="0 0 11 13"><path d="M0.5,12.5 H10.5 V4.5 L5.5,0.5 L0.5,4.5 Z" fill="#2b2b2b" stroke="#5e5e5e"/><path d="M3,7.5 H8" stroke="#6a6a6a"/></svg>
<svg style="position:absolute;left:65px;top:642px" width="11" height="13" viewBox="0 0 11 13"><path d="M0.5,12.5 H10.5 V4.5 L5.5,0.5 L0.5,4.5 Z" fill="#2b2b2b" stroke="#5e5e5e"/><path d="M3,7.5 H8" stroke="#6a6a6a"/></svg>
<svg style="position:absolute;left:40.2px;top:114px" width="10" height="13" viewBox="0 0 10 13"><path d="M0.5,0.5 L9.5,6.5 L0.5,12.5 Z" fill="#499c54"/></svg>
<svg style="position:absolute;left:40.2px;top:402px" width="10" height="13" viewBox="0 0 10 13"><path d="M0.5,0.5 L9.5,6.5 L0.5,12.5 Z" fill="#499c54"/></svg>
</div>
<div class="a" style="left:418px;top:169px;width:34px;height:26px;border:3px solid #f83333"></div>
<svg style="position:absolute;left:0;top:0" width="1151" height="726"><path d="M457,166.5 L470,153.5 L472.7,157 L530.5,137.8 L475,164.8 L476.2,168.3 Z" fill="#f83333"/></svg>
</body></html>
